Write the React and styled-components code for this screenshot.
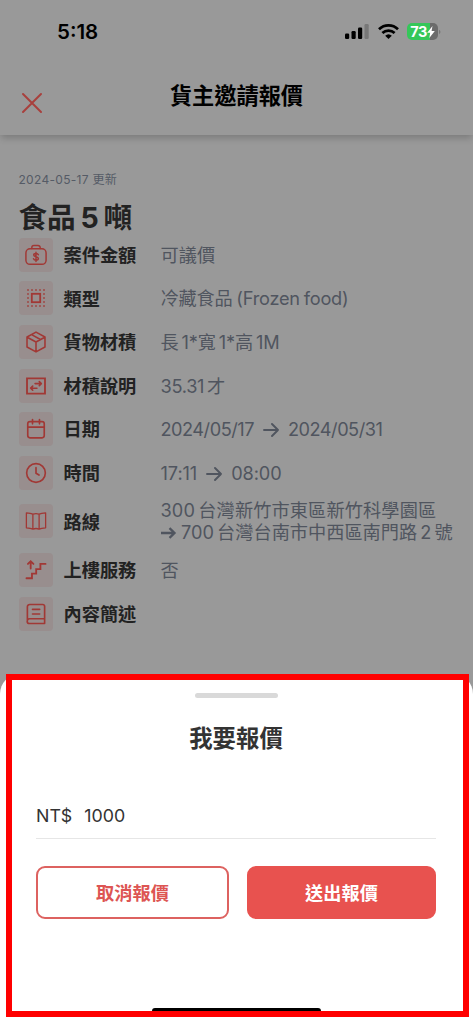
import React from 'react';
import styled, { createGlobalStyle } from 'styled-components';

const Global = createGlobalStyle`
  * { box-sizing: border-box; }
  body { margin: 0; background: #999; font-family: Inter, "Noto Sans CJK TC", sans-serif; }
  svg { display: block; }
`;

const Screen = styled.div`
  position: relative;
  width: 473px;
  height: 1024px;
  overflow: hidden;
  display: flex;
  flex-direction: column;
  background: #999;
`;

const Header = styled.header`
  flex: none;
  height: 135px;
  background: #999;
  box-shadow: 0 4px 7px -1px rgba(0, 0, 0, 0.2);
`;

const StatusBar = styled.div`
  height: 56px;
  padding: 7px 32px 0 57px;
  display: flex;
  align-items: center;
  justify-content: space-between;
  color: #000;
`;

const Time = styled.span`
  font-size: 20.5px;
  line-height: 24px;
  font-weight: 600;
`;

const Indicators = styled.div`
  display: flex;
  align-items: center;
`;

const Wifi = styled.svg`
  margin-left: 8px;
`;

const Battery = styled.div`
  margin-left: 8px;
  width: 31px;
  height: 17px;
  border-radius: 5px;
  display: flex;
  align-items: center;
  justify-content: center;
  background: linear-gradient(90deg, #35c759 73%, #6b6b6b 73%);
  color: #fff;
  font-size: 14.5px;
  font-weight: 700;
  letter-spacing: -0.5px;
`;

const NavBar = styled.div`
  height: 79px;
  padding: 0 21px;
  display: grid;
  grid-template-columns: 24px 1fr 24px;
  align-items: center;
`;

const CloseButton = styled.button`
  border: 0;
  padding: 14px 0 0;
  background: none;
  color: #a8403d;
`;

const NavTitle = styled.h1`
  margin: 0;
  text-align: center;
  font-size: 22.2px;
  line-height: 32px;
  font-weight: 700;
  color: #000;
`;

const Content = styled.main`
  padding: 36px 0 0 18.5px;
`;

const Updated = styled.div`
  font-size: 12px;
  line-height: 18px;
  letter-spacing: 0.3px;
  color: #555b66;
`;

const CaseTitle = styled.h2`
  margin: 9px 0 -0.4px;
  font-size: 28.6px;
  line-height: 40px;
  font-weight: 700;
  word-spacing: -2px;
  color: #222;
`;

const Rows = styled.div`
  display: flex;
  flex-direction: column;
  gap: 9.65px;
`;

const Row = styled.div`
  display: grid;
  grid-template-columns: 34px 97px 1fr;
  align-items: center;
`;

const IconTile = styled.div`
  width: 34px;
  height: 34px;
  border-radius: 4px;
  display: flex;
  align-items: center;
  justify-content: center;
  background: #988e8e;
  color: #a13835;
`;

const Label = styled.span`
  padding: 0.5px 0 0 11px;
  font-size: 18.2px;
  line-height: 26px;
  font-weight: 700;
  color: #222;
  white-space: nowrap;
`;

const Value = styled.span`
  padding-left: 11px;
  font-size: 18.2px;
  line-height: 22px;
  letter-spacing: ${p => p.$spacing || 0}px;
  word-spacing: ${p => p.$word || 0}px;
  color: #50555f;
  white-space: nowrap;
`;

const Line = styled.span`
  display: block;
  letter-spacing: ${p => p.$spacing || 0}px;
`;

const InlineArrow = styled.svg`
  display: inline-block;
  vertical-align: -2px;
  margin: 0 ${p => p.$gap}px 0 ${p => p.$lead ?? p.$gap}px;
`;

const Sheet = styled.section`
  position: absolute;
  left: 0;
  right: 0;
  top: 674px;
  bottom: 0;
  border-radius: 20px 20px 0 0;
  background: #fff;
  padding: 19px 37px 0 36px;
  display: flex;
  flex-direction: column;
`;

const Handle = styled.div`
  align-self: center;
  width: 83px;
  height: 5px;
  border-radius: 3px;
  background: #d9d9d9;
`;

const SheetTitle = styled.h2`
  margin: 23px 0 0;
  text-align: center;
  font-size: 23.4px;
  line-height: 36px;
  font-weight: 700;
  color: #333;
`;

const AmountField = styled.div`
  margin-top: 42px;
  height: 40px;
  display: flex;
  gap: 12px;
  align-items: center;
  border-bottom: 1px solid #e6e6e6;
  padding-bottom: 7px;
  font-size: 17.8px;
  color: #333;
`;

const Actions = styled.div`
  margin-top: 27px;
  display: grid;
  grid-template-columns: 193px 189px;
  justify-content: space-between;
`;

const Button = styled.button`
  height: 53px;
  padding: 0 0 2px;
  border: 2px solid ${p => (p.$primary ? '#e8524f' : '#dd6260')};
  border-radius: 9px;
  background: ${p => (p.$primary ? '#e8524f' : '#fff')};
  color: ${p => (p.$primary ? '#fff' : '#dd5553')};
  font-family: inherit;
  font-size: 18.2px;
  font-weight: 700;
`;

const HomeIndicator = styled.div`
  position: absolute;
  left: 152px;
  top: 1008px;
  width: 169px;
  height: 6px;
  border-radius: 3px;
  background: #000;
`;

const Highlight = styled.div`
  position: absolute;
  left: 6px;
  top: 674px;
  width: 463px;
  height: 343px;
  border: 6px solid #f00;
`;

const Stroke = ({ children, w = 1.8, size = 22 }) => (
  <svg width={size} height={size} viewBox="0 0 24 24" fill="none" stroke="currentColor" strokeWidth={w} strokeLinecap="round" strokeLinejoin="round">
    {children}
  </svg>
);

const Arrow = ({ gap = 0, lead, bold }) => (
  <InlineArrow $gap={gap} $lead={lead} width="16" height="16" viewBox="0 0 16 16" fill="none" stroke="currentColor" strokeWidth={bold ? 2.3 : 1.9} strokeLinecap={bold ? 'butt' : 'round'} strokeLinejoin={bold ? 'miter' : 'round'}>
    <path d={bold ? 'M0 8H13.5M8.5 3.2l5 4.8-5 4.8' : 'M1 8H15M9 2l6 6-6 6'} />
  </InlineArrow>
);

const MoneyBag = () => (
  <Stroke w={1.6}>
    <rect x="1" y="5.2" width="22" height="17" rx="4.5" />
    <path d="M7.4 5V4a2.4 2.4 0 0 1 2.4-2.4h4.4A2.4 2.4 0 0 1 16.6 4v1" />
    <path d="M14.6 11.7c-.4-1-1.4-1.4-2.6-1.4-1.4 0-2.5.7-2.5 1.7 0 2.5 5.1 1.2 5.1 3.8 0 1.1-1.1 1.8-2.6 1.8-1.3 0-2.3-.5-2.7-1.5M12 9v10" />
  </Stroke>
);
const Category = () => (
  <svg width="22" height="22" viewBox="0 0 22 22" fill="none" stroke="currentColor" strokeWidth="1.6">
    <rect x="6.8" y="6.8" width="8.4" height="8.4" strokeWidth="1.8" />
    <path d="M2.2 3H19.8M2.2 19H19.8" strokeDasharray="1.6 2.4" />
    <path d="M3 6.2V17M19 6.2V17" strokeDasharray="1.6 2.4" />
  </svg>
);
const Package = () => (
  <Stroke w={1.7}>
    <path d="M12 1.2 21.8 6.6v10.8L12 22.8l-9.8-5.4V6.6zM2.4 6.8 12 12l9.6-5.2M12 12v10.4M7.2 4l9.6 5.3" />
  </Stroke>
);
const Volume = () => (
  <Stroke>
    <path strokeLinejoin="miter" strokeWidth="2" d="M2.2 3.6h19.6v16.8H2.2z" />
    <path d="M11 9.4h6.8M15.6 7.2l2.2 2.2-2.2 2.2M13 14.4H6.2M8.4 12.2l-2.2 2.2 2.2 2.2" />
  </Stroke>
);
const Calendar = () => (
  <Stroke>
    <rect x="3" y="4" width="18" height="17.6" rx="2.4" />
    <path d="M3 9.9h18M8.2 1.6v4.8M15.8 1.6v4.8" />
  </Stroke>
);
const Clock = () => (
  <Stroke>
    <circle cx="12" cy="12" r="10.2" />
    <path d="M12 6.2v6l3.3 2" />
  </Stroke>
);
const MapIcon = () => (
  <Stroke w={1.4}>
    <path d="M1.5 3.2c2 .2 5.1.6 7.1 1.4 2.2-.8 4.6-.8 6.8 0 2-.8 5.1-1.2 7.1-1.4v16.2c-2 .2-5.1.6-7.1 1.4-2.2-.8-4.6-.8-6.8 0-2-.8-5.1-1.2-7.1-1.4zM8.6 4.6v16.2M15.4 4.6v16.2" />
  </Stroke>
);
const Stairs = () => (
  <Stroke w={2}>
    <path strokeLinejoin="miter" d="M1.6 21h6v-5h4.6v-5h4.6V5.4h5.6M6.2 10.4V2.4M3.2 5.4l3-3 3 3" />
  </Stroke>
);
const Book = () => (
  <Stroke>
    <path d="M21.4 17.2V3.6a2 2 0 0 0-2-2H5.2A2.6 2.6 0 0 0 2.6 4.2v15.4M21.4 17.2H5a2.4 2.4 0 0 0 0 5.2h16.4zM8.2 7h7.8M8.2 12h7.8" />
  </Stroke>
);

const rows = [
  { icon: MoneyBag, label: '案件金額', value: '可議價' },
  { icon: Category, label: '類型', value: '冷藏食品 (Frozen food)', word: -1, spacing: -0.22 },
  { icon: Package, label: '貨物材積', value: '長 1*寬 1*高 1M', word: -2, spacing: -0.15 },
  { icon: Volume, label: '材積說明', value: '35.31 才', word: -2, spacing: -0.3 },
  { icon: Calendar, label: '日期', spacing: -0.5, value: <>2024/05/17<Arrow gap={9} />2024/05/31</> },
  { icon: Clock, label: '時間', spacing: -0.1, value: <>17:11<Arrow gap={9} />08:00</> },
  {
    icon: MapIcon,
    label: '路線',
    word: -2,
    value: (
      <>
        <Line $spacing={0.12}>300 台灣新竹市東區新竹科學園區</Line>
        <Line><Arrow bold lead={0} gap={4.5} />700 台灣台南市中西區南門路 2 號</Line>
      </>
    ),
  },
  { icon: Stairs, label: '上樓服務', value: '否' },
  { icon: Book, label: '內容簡述', value: '' },
];

export default function App() {
  return (
    <Screen>
      <Global />
      <Header>
        <StatusBar>
          <Time>5:18</Time>
          <Indicators>
            <svg width="25" height="16" viewBox="0 0 25 16">
              <rect x="0" y="9.6" width="4.2" height="5.4" rx="1.2" />
              <rect x="6.5" y="7" width="4.2" height="8" rx="1.2" />
              <rect x="13" y="3.5" width="4.2" height="11.5" rx="1.2" />
              <rect x="19.5" y="0" width="4.2" height="15" rx="1.2" fill="#777" />
            </svg>
            <Wifi width="21" height="16" viewBox="0 0 21 16" fill="none" stroke="#000" strokeWidth="2.7">
              <path d="M1 5.3a13.6 13.6 0 0 1 19 0M4.4 9a8.8 8.8 0 0 1 12.2 0" />
              <path d="M10.5 15 7.2 11.7a4.8 4.8 0 0 1 6.6 0z" fill="#000" stroke="none" />
            </Wifi>
            <Battery>
              73
              <svg width="8" height="12" viewBox="0 0 8 12" fill="#fff"><path d="M5.5 0 0.2 6.7h3L2.3 12 7.8 5H4.6z" /></svg>
            </Battery>
            <svg width="3" height="6" viewBox="0 0 3 6"><path d="M1 0.8q3 2.2 0 4.4z" fill="#777" /></svg>
          </Indicators>
        </StatusBar>
        <NavBar>
          <CloseButton aria-label="關閉">
            <svg width="22" height="22" viewBox="0 0 22 22" stroke="currentColor" strokeWidth="2" strokeLinecap="round"><path d="M2 2l18 18M20 2 2 20" /></svg>
          </CloseButton>
          <NavTitle>貨主邀請報價</NavTitle>
        </NavBar>
      </Header>
      <Content>
        <Updated>2024-05-17 更新</Updated>
        <CaseTitle>食品 5 噸</CaseTitle>
        <Rows>
          {rows.map(({ icon: Icon, label, value, word, spacing }) => (
            <Row key={label}>
              <IconTile><Icon /></IconTile>
              <Label>{label}</Label>
              <Value $word={word} $spacing={spacing}>{value}</Value>
            </Row>
          ))}
        </Rows>
      </Content>
      <Sheet>
        <Handle />
        <SheetTitle>我要報價</SheetTitle>
        <AmountField><span>NT$</span><span>1000</span></AmountField>
        <Actions>
          <Button>取消報價</Button>
          <Button $primary>送出報價</Button>
        </Actions>
      </Sheet>
      <HomeIndicator />
      <Highlight />
    </Screen>
  );
}
